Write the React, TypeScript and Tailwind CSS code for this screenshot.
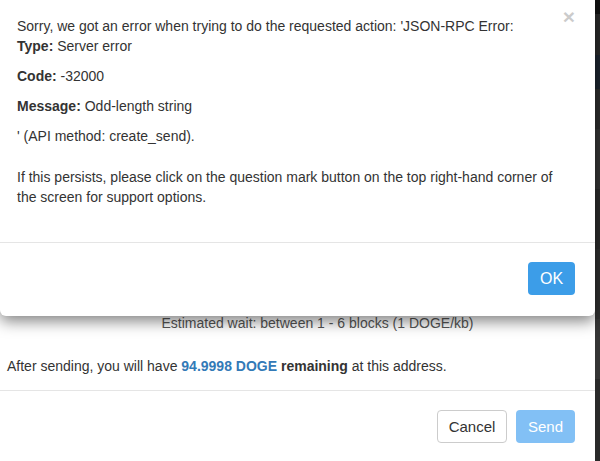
import React from "react";

export default function App() {
  return (
    <div
      className="relative w-[600px] h-[461px] overflow-hidden flex text-[14px] leading-[20px] text-[#333]"
      style={{ fontFamily: '"Liberation Sans", Arial, sans-serif' }}
    >
      {/* underlying send modal */}
      <div className="w-[595px] h-full bg-white flex flex-col pt-[313px]">
        <div className="pl-[40px] text-center text-[#555]">
          Estimated wait: between 1 - 6 blocks (1 DOGE/kb)
        </div>
        <div className="mt-[23px] pl-[7px]">
          After sending, you will have{" "}
          <b className="text-[#337ab7]">94.9998 DOGE</b> <b>remaining</b> at this address.
        </div>
        <div className="mt-[14px] border-t border-[#e5e5e5] pt-[19px] pr-[20px] flex justify-end gap-[9px]">
          <button className="h-[33px] w-[70px] rounded-[4px] border border-[#ccc] bg-white text-[15px] text-[#333]">
            Cancel
          </button>
          <button className="h-[33px] w-[59px] rounded-[4px] bg-[#82c0f5] text-[15px] text-white">
            Send
          </button>
        </div>
      </div>
      {/* dark page edge */}
      <div className="w-[5px] h-full flex flex-col">
        <div className="h-[14px] bg-[#121212]" />
        <div className="h-[41px] bg-[#2a2a2a]" />
        <div className="h-[34px] bg-[#1d2630]" />
        <div className="h-[40px] bg-[#2e2e2e]" />
        <div className="h-[60px] bg-[#353535]" />
        <div className="h-[60px] bg-[#2c2c2c]" />
        <div className="h-[70px] bg-[#303030]" />
        <div className="h-[60px] bg-[#353535]" />
        <div className="flex-1 bg-[#2a2a2a]" />
      </div>

      {/* error modal overlay */}
      <div className="absolute left-0 top-0 w-[595px] h-[316px] bg-white rounded-b-[6px] shadow-[0_5px_15px_rgba(0,0,0,0.5)] flex flex-col">
        <button className="absolute right-[20px] top-[6px] text-[21px] font-bold leading-none text-black opacity-20">
          ×
        </button>
        <div className="pt-[16px] pl-[17px] pr-[32px] h-[242px]">
          <p className="mb-[10px]">
            Sorry, we got an error when trying to do the requested action: 'JSON-RPC Error:
            <br />
            <b>Type:</b> Server error
          </p>
          <p className="mb-[10px]">
            <b>Code:</b> -32000
          </p>
          <p className="mb-[10px]">
            <b>Message:</b> Odd-length string
          </p>
          <p>' (API method: create_send).</p>
          <p className="mt-[21px]">
            If this persists, please click on the question mark button on the top right-hand corner of
            the screen for support options.
          </p>
        </div>
        <div className="border-t border-[#e5e5e5] pt-[19px] pr-[20px] flex justify-end">
          <button className="h-[33px] w-[47px] rounded-[4px] bg-[#3c9de8] text-[16px] text-white">
            OK
          </button>
        </div>
      </div>
    </div>
  );
}
